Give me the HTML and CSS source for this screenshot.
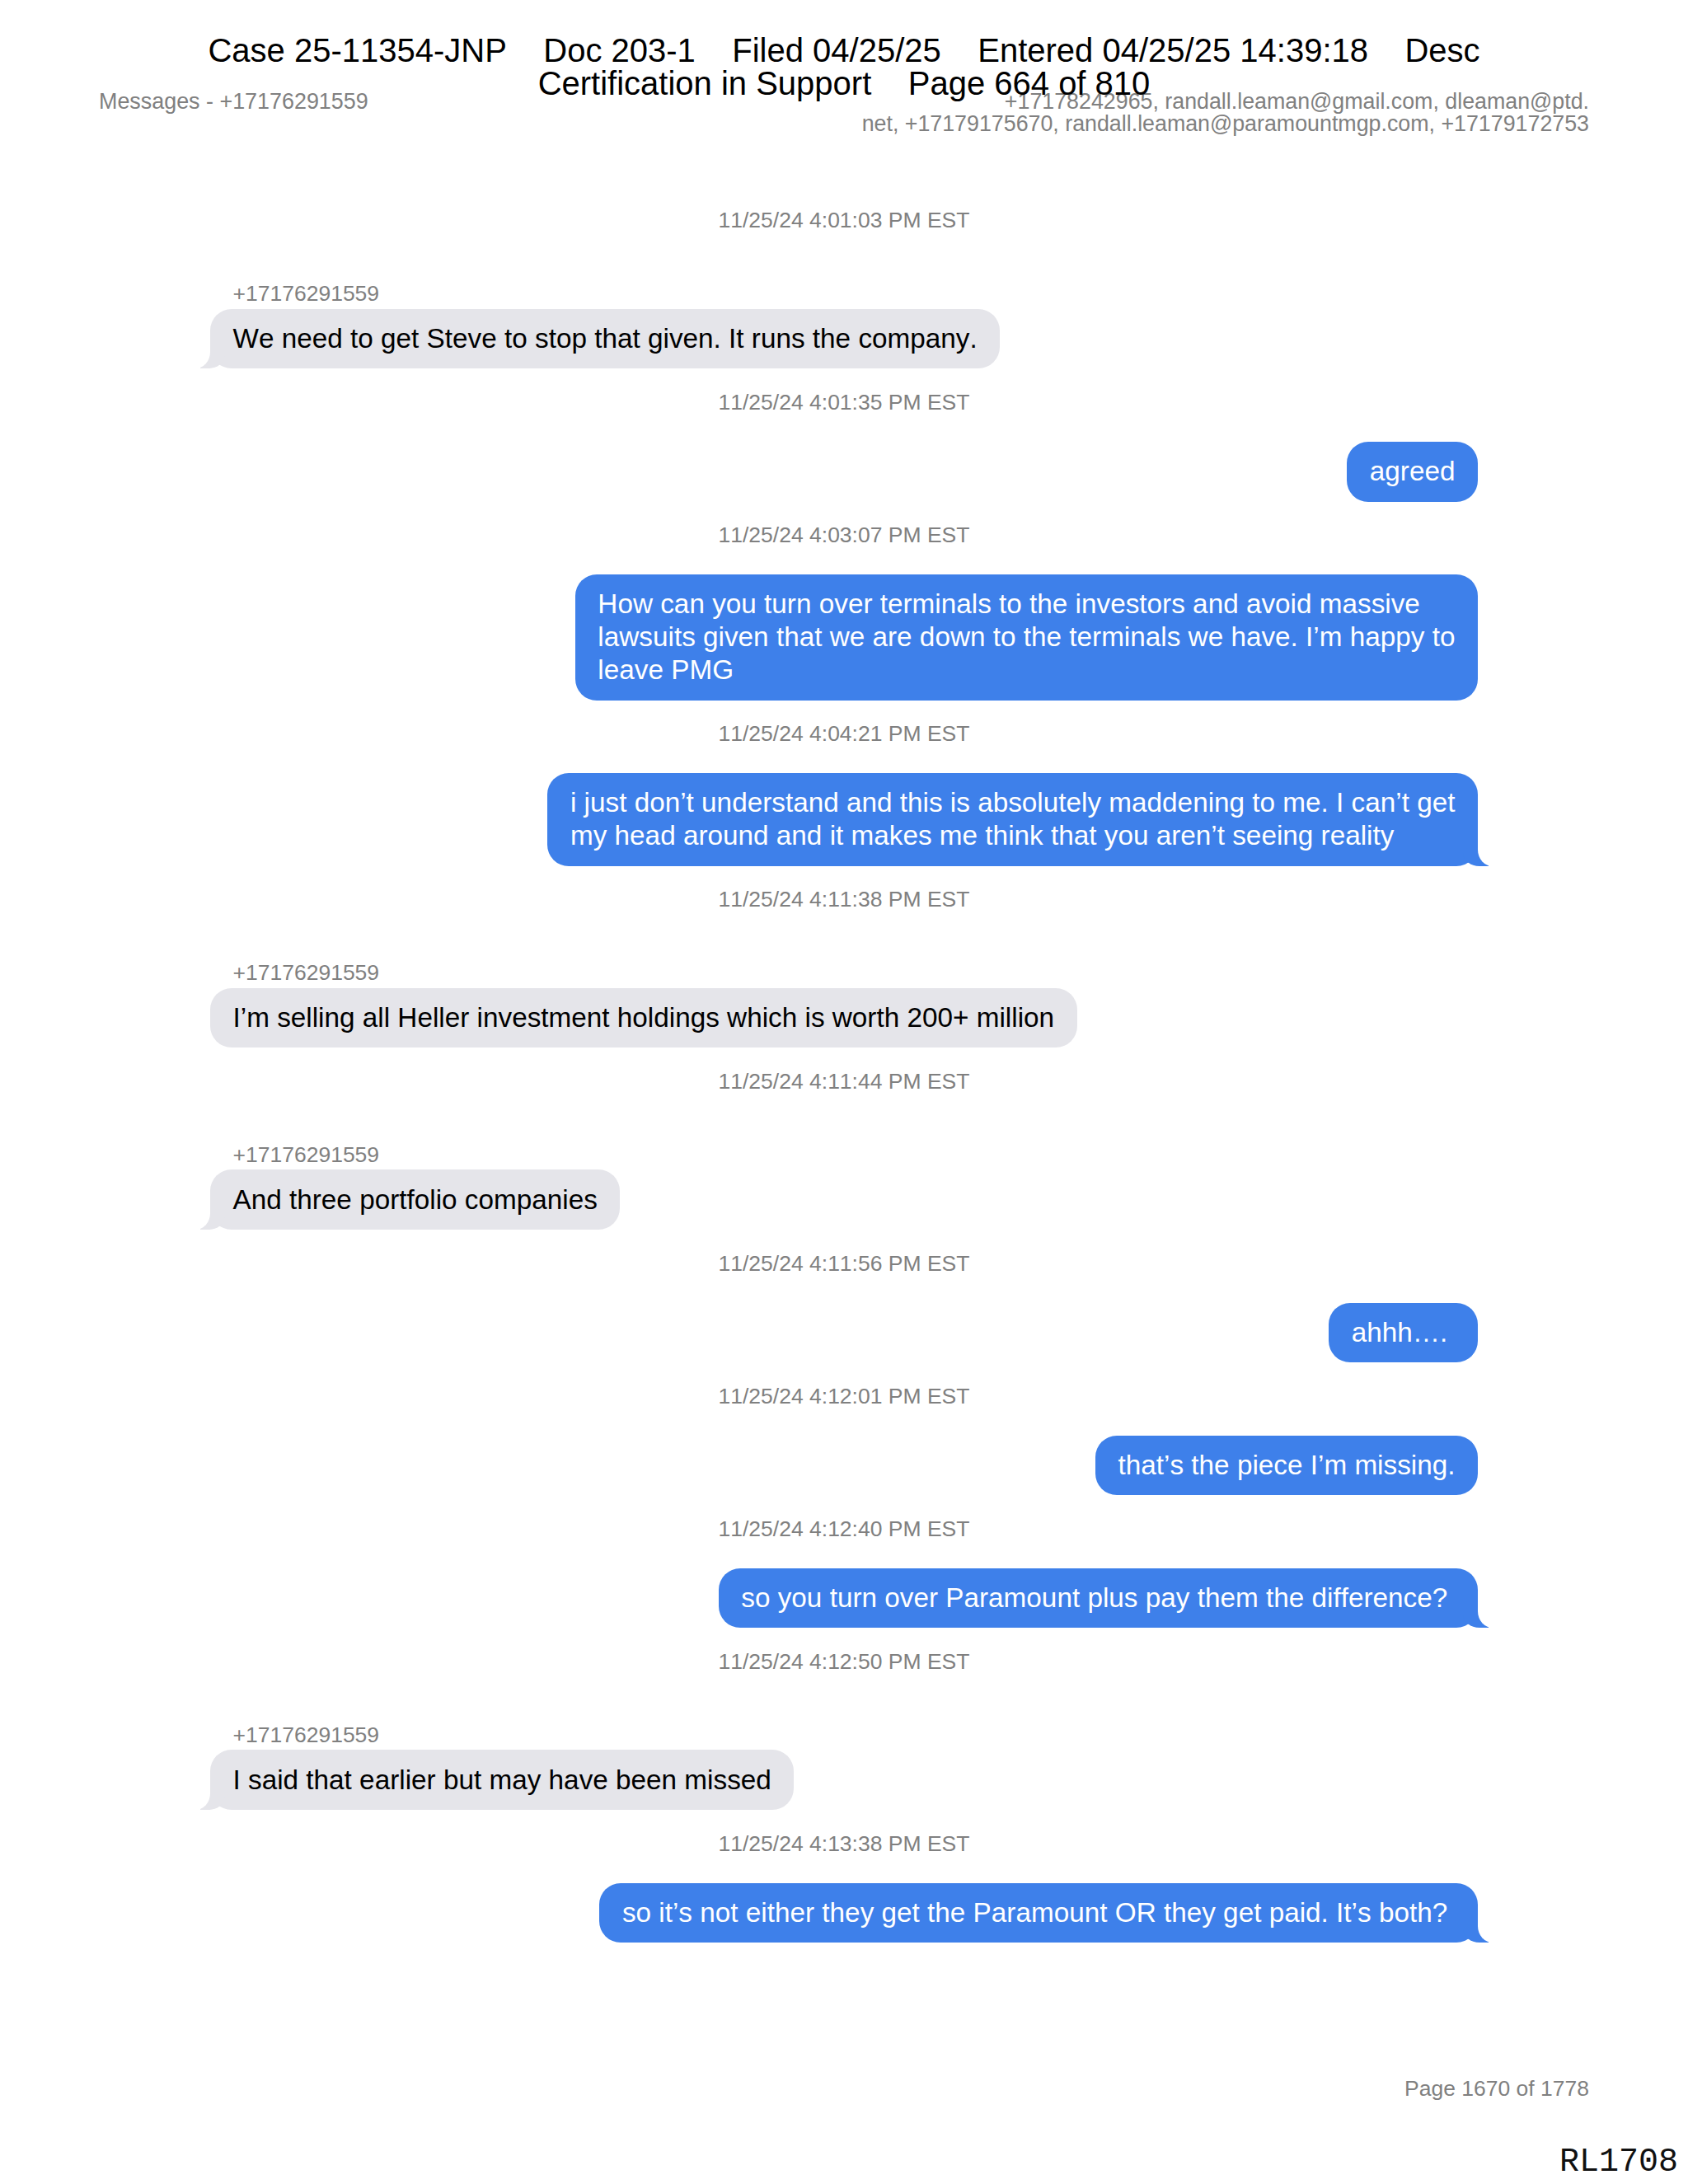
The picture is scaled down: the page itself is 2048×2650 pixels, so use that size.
FILE: index.html
```html
<!DOCTYPE html>
<html lang="en">
<head>
<meta charset="utf-8">
<title>Messages - +17176291559</title>
<link rel="stylesheet" href="styles.css">
</head>
<body>
<div class="page">
  <div class="stamp">
    <div class="stamp-line">Case 25-11354-JNP    Doc 203-1    Filed 04/25/25    Entered 04/25/25 14:39:18    Desc</div>
    <div class="stamp-line">Certification in Support    Page 664 of 810</div>
  </div>

  <header class="head">
    <div class="title">Messages - +17176291559</div>
    <div class="participants">+17178242965, randall.leaman@gmail.com, dleaman@ptd.<br>net, +17179175670, randall.leaman@paramountmgp.com, +17179172753</div>
  </header>

  <main class="thread">
    <div class="ts">11/25/24 4:01:03 PM EST</div>
    <div class="sender">+17176291559</div>
    <div class="bubble in tail">We need to get Steve to stop that given. It runs the company.</div>

    <div class="ts">11/25/24 4:01:35 PM EST</div>
    <div class="bubble out">agreed</div>

    <div class="ts">11/25/24 4:03:07 PM EST</div>
    <div class="bubble out">How can you turn over terminals to the investors and avoid massive<br>lawsuits given that we are down to the terminals we have. I’m happy to<br>leave PMG</div>

    <div class="ts">11/25/24 4:04:21 PM EST</div>
    <div class="bubble out tail">i just don’t understand and this is absolutely maddening to me. I can’t get<br>my head around and it makes me think that you aren’t seeing reality</div>

    <div class="ts">11/25/24 4:11:38 PM EST</div>
    <div class="sender">+17176291559</div>
    <div class="bubble in">I’m selling all Heller investment holdings which is worth 200+ million</div>

    <div class="ts">11/25/24 4:11:44 PM EST</div>
    <div class="sender">+17176291559</div>
    <div class="bubble in tail">And three portfolio companies</div>

    <div class="ts">11/25/24 4:11:56 PM EST</div>
    <div class="bubble out">ahhh….&nbsp;</div>

    <div class="ts">11/25/24 4:12:01 PM EST</div>
    <div class="bubble out">that’s the piece I’m missing.</div>

    <div class="ts">11/25/24 4:12:40 PM EST</div>
    <div class="bubble out tail">so you turn over Paramount plus pay them the difference?&nbsp;</div>

    <div class="ts">11/25/24 4:12:50 PM EST</div>
    <div class="sender">+17176291559</div>
    <div class="bubble in tail">I said that earlier but may have been missed</div>

    <div class="ts">11/25/24 4:13:38 PM EST</div>
    <div class="bubble out tail">so it’s not either they get the Paramount OR they get paid. It’s both?&nbsp;</div>
  </main>

  <footer class="foot">Page 1670 of 1778</footer>
  <div class="bates">RL1708</div>
</div>
</body>
</html>
```

FILE: styles.css
```css
html, body {
  margin: 0;
  padding: 0;
  background: #ffffff;
}

.page {
  position: relative;
  width: 2048px;
  height: 2650px;
  box-sizing: border-box;
  padding: 110px 120px 101px;
  display: flex;
  flex-direction: column;
  font-family: "Liberation Sans", Arial, sans-serif;
  font-kerning: none;
  color: #000;
  overflow: hidden;
}

/* court filing stamp, overlaid on the page */
.stamp {
  position: absolute;
  top: 41px;
  left: 0;
  right: 0;
  text-align: center;
  font-size: 40px;
  line-height: 40px;
  color: #000;
  z-index: 2;
}

.stamp-line {
  white-space: pre;
}

.head {
  display: flex;
  justify-content: space-between;
  align-items: flex-start;
  color: #808080;
}

.title {
  font-size: 26.9px;
  line-height: 27px;
}

.participants {
  font-size: 26.8px;
  line-height: 27px;
  text-align: right;
}

.thread {
  display: flex;
  flex-direction: column;
  margin: 88px 135px 0;
}

.ts {
  align-self: center;
  font-size: 26.5px;
  line-height: 30px;
  color: #808080;
  margin-top: 25.3px;
}

.ts:first-child {
  margin-top: 0;
}

.sender {
  align-self: flex-start;
  padding-left: 27.5px;
  font-size: 26.5px;
  line-height: 27px;
  color: #808080;
  margin-top: 61px;
}

.bubble {
  position: relative;
  box-sizing: border-box;
  max-width: 1200px;
  padding: 16.4px 27.5px;
  border-radius: 26px;
  font-size: 33.3px;
  line-height: 40px;
}

.ts + .bubble {
  margin-top: 33px;
}

.sender + .bubble {
  margin-top: 4.7px;
}

.bubble.in {
  align-self: flex-start;
  background: #e5e5ea;
  color: #000;
}

.bubble.out {
  align-self: flex-end;
  background: #3e80ea;
  color: #fff;
}

.bubble.tail::before,
.bubble.tail::after {
  content: "";
  position: absolute;
  bottom: 0;
  height: 26px;
}

.bubble.in.tail::before {
  left: -12px;
  width: 30px;
  background: #e5e5ea;
  border-bottom-right-radius: 20px 16px;
}

.bubble.in.tail::after {
  left: -30px;
  width: 30px;
  background: #fff;
  border-bottom-right-radius: 18px 20px;
}

.bubble.out.tail::before {
  right: -13px;
  width: 31px;
  background: #3e80ea;
  border-bottom-left-radius: 20px 16px;
}

.bubble.out.tail::after {
  right: -31px;
  width: 31px;
  background: #fff;
  border-bottom-left-radius: 18px 20px;
}

.foot {
  margin-top: auto;
  text-align: right;
  font-size: 26.5px;
  line-height: 30px;
  color: #808080;
}

.bates {
  position: absolute;
  top: 2604px;
  right: 12px;
  font-family: "Liberation Mono", "Courier New", monospace;
  font-size: 40px;
  line-height: 40px;
  color: #111;
}
```
